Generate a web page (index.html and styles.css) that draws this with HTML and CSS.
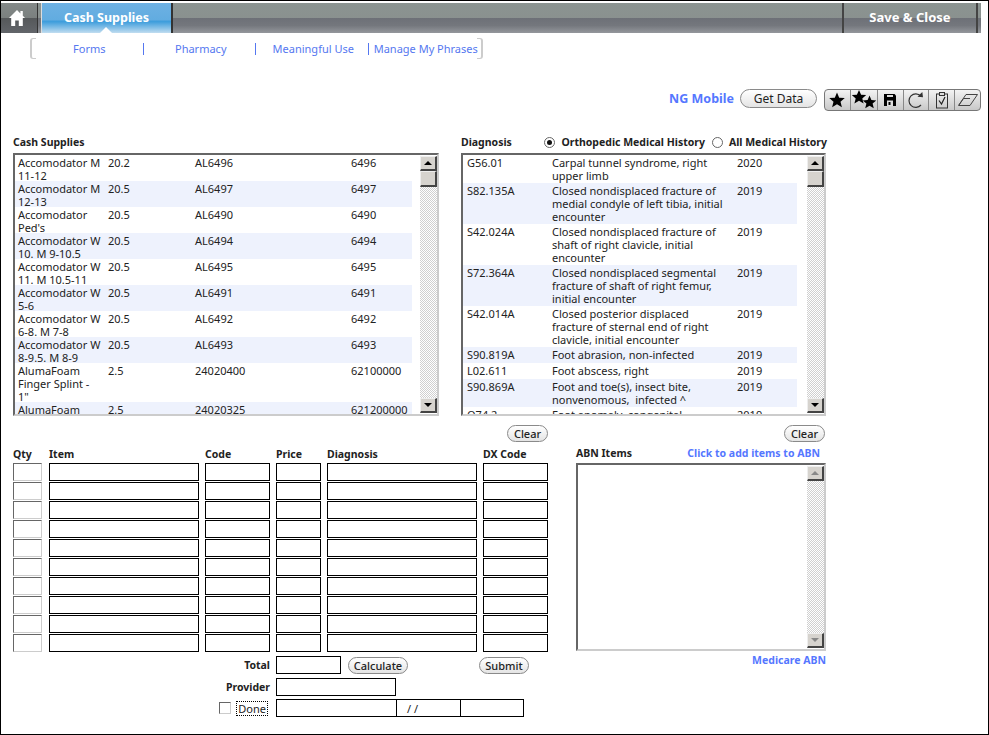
FILE: index.html
```html
<!DOCTYPE html>
<html lang="en">
<head>
<meta charset="utf-8">
<title>Cash Supplies</title>
<link rel="stylesheet" href="styles.css">
</head>
<body>
<div class="frame">
  <header class="toolbar">
    <div class="home"><svg width="18" height="18" viewBox="0 0 18 18"><path fill="#fff" d="M9 1 L1 9 L3.200 9 L3.200 17 L7.200 17 L7.200 11.500 L10.800 11.500 L10.800 17 L14.800 17 L14.800 9 L17 9 L14.800 6.800 L14.800 2 L12.400 2 L12.400 4.400 Z"/></svg></div>
    <div class="tab">Cash Supplies<span class="caret"></span></div>
    <div class="spacer"></div>
    <div class="save">Save &amp; Close</div>
  </header>
  <nav class="subnav">
    <a class="sub s1">Forms</a><a class="sub s2">Pharmacy</a><a class="sub s3">Meaningful Use</a><a class="sub s4">Manage My Phrases</a>
  </nav>
  <div class="mobile-row">
    <span class="link ng">NG Mobile</span>
    <button class="pill get">Get Data</button>
    <div class="iconbar">
      <div class="ic"><svg width="18" height="18" viewBox="0 0 18 18"><path d="M9 1.500l2.200 5.200 5.600.4-4.300 3.600 1.400 5.500L9 13.300l-4.900 2.900 1.400-5.500L1.200 7.100l5.600-.4z"/></svg></div>
      <div class="ic"><svg width="26" height="22" viewBox="0 0 26 22"><path d="M8 1l2.100 4.700 5.100.4-3.900 3.300 1.300 5L8 11.800l-4.600 2.600 1.300-5L.8 6.100l5.100-.4z"/><path d="M18.500 6.500l1.900 4.500 4.900.4-3.700 3.100 1.200 4.800-4.300-2.500-4.300 2.500 1.200-4.800-3.700-3.100 4.900-.4z"/></svg></div>
      <div class="ic"><svg width="12" height="12" viewBox="0 0 12 12"><path d="M0 0h10.500L12 1.500V12H0z"/><rect x="3" y="1" width="6" height="2" fill="#ddd"/><rect x="3" y="6.500" width="6" height="5.500" fill="#ddd"/><rect x="4.500" y="8" width="2" height="3"/></svg></div>
      <div class="ic"><svg width="16" height="20" viewBox="0 0 16 20"><path fill="none" stroke="#333" stroke-width="1.200" d="M12.800 6A6.800 6.800 0 1 0 13 15"/><path fill="#333" d="M9.500 6.800L15 7.200 14.300 2z"/></svg></div>
      <div class="ic"><svg width="14" height="18" viewBox="0 0 14 18"><rect x="1.500" y="3" width="11" height="14" fill="none" stroke="#333"/><rect x="4.500" y="1.500" width="5" height="3" fill="#ddd" stroke="#333"/><path fill="none" stroke="#222" stroke-width="1.200" d="M4 9.500l2.500 3.500L10 6"/></svg></div>
      <div class="ic"><svg width="22" height="14" viewBox="0 0 22 14"><path fill="none" stroke="#444" d="M9 1.500H20.500L13 12.500H1.500z"/><path fill="none" stroke="#444" d="M6.500 5.500L13 5.500M6.500 5.500L2 12"/></svg></div>
    </div>
  </div>

  <section class="upper">
    <div class="col-left">
      <div class="label-row"><b class="lbl">Cash Supplies</b></div>
      <div class="listbox left-box">
        <div class="rows">
          <div class="row"><span class="c1">Accomodator M 11-12</span><span class="c2">20.2</span><span class="c3">AL6496</span><span>6496</span></div>
          <div class="row alt"><span class="c1">Accomodator M 12-13</span><span class="c2">20.5</span><span class="c3">AL6497</span><span>6497</span></div>
          <div class="row"><span class="c1">Accomodator Ped's</span><span class="c2">20.5</span><span class="c3">AL6490</span><span>6490</span></div>
          <div class="row alt"><span class="c1">Accomodator W 10. M 9-10.5</span><span class="c2">20.5</span><span class="c3">AL6494</span><span>6494</span></div>
          <div class="row"><span class="c1">Accomodator W 11. M 10.5-11</span><span class="c2">20.5</span><span class="c3">AL6495</span><span>6495</span></div>
          <div class="row alt"><span class="c1">Accomodator W 5-6</span><span class="c2">20.5</span><span class="c3">AL6491</span><span>6491</span></div>
          <div class="row"><span class="c1">Accomodator W 6-8. M 7-8</span><span class="c2">20.5</span><span class="c3">AL6492</span><span>6492</span></div>
          <div class="row alt"><span class="c1">Accomodator W 8-9.5. M 8-9</span><span class="c2">20.5</span><span class="c3">AL6493</span><span>6493</span></div>
          <div class="row tall"><span class="c1">AlumaFoam Finger Splint -<br>1"</span><span class="c2">2.5</span><span class="c3">24020400</span><span>62100000</span></div>
          <div class="row alt"><span class="c1">AlumaFoam</span><span class="c2">2.5</span><span class="c3">24020325</span><span>621200000</span></div>
        </div>
        <div class="sb"><div class="sbtn up"><i></i></div><div class="thumb"></div><div class="track"></div><div class="sbtn down"><i></i></div></div>
      </div>
    </div>
    <div class="col-right">
      <div class="label-row">
        <b class="lbl dx-title">Diagnosis</b>
        <span class="radio on"></span><b class="lbl opt1">Orthopedic Medical History</b>
        <span class="radio"></span><b class="lbl">All Medical History</b>
      </div>
      <div class="listbox right-box">
        <div class="rows">
          <div class="drow"><span class="d1">G56.01</span><span class="d2">Carpal tunnel syndrome, right upper limb</span><span>2020</span></div>
          <div class="drow alt"><span class="d1">S82.135A</span><span class="d2">Closed nondisplaced fracture of medial condyle of left tibia, initial encounter</span><span>2019</span></div>
          <div class="drow"><span class="d1">S42.024A</span><span class="d2">Closed nondisplaced fracture of shaft of right clavicle, initial encounter</span><span>2019</span></div>
          <div class="drow alt"><span class="d1">S72.364A</span><span class="d2">Closed nondisplaced segmental fracture of shaft of right femur, initial encounter</span><span>2019</span></div>
          <div class="drow"><span class="d1">S42.014A</span><span class="d2">Closed posterior displaced fracture of sternal end of right clavicle, initial encounter</span><span>2019</span></div>
          <div class="drow alt"><span class="d1">S90.819A</span><span class="d2">Foot abrasion, non-infected</span><span>2019</span></div>
          <div class="drow"><span class="d1">L02.611</span><span class="d2">Foot abscess, right</span><span>2019</span></div>
          <div class="drow alt"><span class="d1">S90.869A</span><span class="d2">Foot and toe(s), insect bite, nonvenomous,&nbsp; infected ^</span><span>2019</span></div>
          <div class="drow"><span class="d1">Q74.2</span><span class="d2">Foot anomaly, congenital</span><span>2019</span></div>
        </div>
        <div class="sb"><div class="sbtn up"><i></i></div><div class="thumb"></div><div class="track"></div><div class="sbtn down"><i></i></div></div>
      </div>
    </div>
  </section>

  <div class="clear-row">
    <div class="clear-a"><button class="pill small">Clear</button></div>
    <div class="clear-b"><button class="pill small">Clear</button></div>
  </div>

  <section class="lower">
    <div class="order">
      <div class="grid-head">
        <b class="lbl">Qty</b><b class="lbl">Item</b><b class="lbl">Code</b><b class="lbl">Price</b><b class="lbl">Diagnosis</b><b class="lbl">DX Code</b>
      </div>
      <div class="grid-row"><input class="qty"><input class="box"><input class="box"><input class="box"><input class="box"><input class="box"></div>
      <div class="grid-row"><input class="qty"><input class="box"><input class="box"><input class="box"><input class="box"><input class="box"></div>
      <div class="grid-row"><input class="qty"><input class="box"><input class="box"><input class="box"><input class="box"><input class="box"></div>
      <div class="grid-row"><input class="qty"><input class="box"><input class="box"><input class="box"><input class="box"><input class="box"></div>
      <div class="grid-row"><input class="qty"><input class="box"><input class="box"><input class="box"><input class="box"><input class="box"></div>
      <div class="grid-row"><input class="qty"><input class="box"><input class="box"><input class="box"><input class="box"><input class="box"></div>
      <div class="grid-row"><input class="qty"><input class="box"><input class="box"><input class="box"><input class="box"><input class="box"></div>
      <div class="grid-row"><input class="qty"><input class="box"><input class="box"><input class="box"><input class="box"><input class="box"></div>
      <div class="grid-row"><input class="qty"><input class="box"><input class="box"><input class="box"><input class="box"><input class="box"></div>
      <div class="grid-row"><input class="qty"><input class="box"><input class="box"><input class="box"><input class="box"><input class="box"></div>
      <div class="foot total-row">
        <b class="lbl foot-label">Total</b><input class="box total"><button class="pill small calc">Calculate</button><button class="pill small submit">Submit</button>
      </div>
      <div class="foot provider-row">
        <b class="lbl foot-label">Provider</b><input class="box provider">
      </div>
      <div class="foot done-row">
        <div class="foot-label done-wrap"><span class="check"></span><span class="done">Done</span></div>
        <div class="sign"><div class="sign-a"></div><div class="sign-b">/ /</div><div class="sign-c"></div></div>
      </div>
    </div>
    <div class="abn">
      <div class="abn-head"><b class="lbl">ABN Items</b><span class="link abn-link">Click to add items to ABN</span></div>
      <div class="listbox abn-box">
        <div class="rows"></div>
        <div class="sb off"><div class="sbtn up"><i></i></div><div class="track"></div><div class="sbtn down"><i></i></div></div>
      </div>
      <div class="abn-foot"><span class="link small-link">Medicare ABN</span></div>
    </div>
  </section>
</div>
</body>
</html>
```
FILE: styles.css
```css
* { box-sizing: border-box; }
html, body { margin: 0; padding: 0; background: #fff; }
body { font-family: "Noto Sans", "Liberation Sans", sans-serif; font-size: 11px; color: #222; overflow: hidden; }
.frame { width: 989px; height: 735px; border: 1px solid #000; padding-top: 2px; overflow: hidden; }

/* Top bar */
.toolbar { display: flex; height: 30px; margin-right: 7px; background: linear-gradient(#8b9491 0, #8a918f 50%, #6d7077 50%, #74777d 75%, #94979c 100%); color: #fff; font-weight: 700; font-size: 12.500px; }
.home { width: 37px; display: flex; align-items: center; justify-content: center; padding-right: 4px; background: linear-gradient(#838988 0, #7b807f 50%, #55585a 50%, #62656a 100%); border-right: 1px solid #333; }
.tab { position: relative; width: 132px; margin-left: 3px; display: flex; align-items: center; justify-content: center; padding-bottom: 2px; background: linear-gradient(#6db1e3 0, #62ace0 55%, #3d9ddc 62%, #8cc3e8 85%, #c1ddf0 100%); border-left: 1px solid #ddd; border-right: 2px solid #333; }
.caret { position: absolute; left: 58px; bottom: 0; border: 6px solid transparent; border-top: 0; border-bottom: 6px solid #fff; }
.spacer { flex: 1; }
.save { width: 136px; margin-right: 3px; font-size: 13px; display: flex; align-items: center; justify-content: center; padding-bottom: 2px; border-left: 2px solid #444; border-right: 2px solid #444; }

/* Sub navigation */
.subnav { display: flex; height: 19px; margin: 6px 0 0 29px; width: 453px; font-size: 11px; align-items: center; }
.subnav::before, .subnav::after { content: ""; flex: none; width: 4px; height: 19px; border: 1px solid #ccc; border-width: 1px 0 1px 2px; border-radius: 3px 0 0 3px; }
.subnav::after { margin-left: -4px; border-width: 1px 2px 1px 0; border-radius: 0 3px 3px 0; }
.sub { display: block; color: #5577f0; text-align: center; line-height: 12px; white-space: nowrap; }
.s1 { width: 107px; }
.s2, .s3 { width: 113px; border-left: 1px solid #5577f0; padding-left: 3px; }
.s4 { width: 114px; border-left: 1px solid #5577f0; padding-left: 2px; }

.link { color: #5577ff; font-weight: 700; font-size: 10.500px; }

/* Mobile row */
.mobile-row { display: flex; align-items: center; justify-content: flex-end; margin-top: 31px; margin-right: 7px; height: 22px; }
.ng { font-size: 12.500px; margin: 0 6px 3px 0; }
.pill { font-family: inherit; color: #222; border: 1px solid #8a8a8a; border-radius: 10px; background: linear-gradient(#fff, #e4e4e4); padding: 0; }
.get { width: 77px; height: 19px; font-size: 12px; margin: 0 7px 3px 0; }
.small { height: 17px; font-size: 11px; font-weight: 500; border-radius: 9px; }
.iconbar { display: flex; width: 157px; height: 22px; border: 1px solid #777; border-radius: 4px; background: linear-gradient(#f3f3f3, #c8c8c8); overflow: hidden; }
.ic { flex: 1; display: flex; align-items: center; justify-content: center; border-left: 1px solid #888; }
.ic:first-child { border-left: 0; }

/* Upper lists */
.upper { display: flex; margin: 24px 0 0 12px; }
.col-left { width: 448px; }
.col-right { width: 366px; }
.label-row { display: flex; align-items: center; height: 14px; margin-bottom: 4px; }
.lbl { font-weight: 700; font-size: 10.500px; color: #222; white-space: nowrap; }
.dx-title { width: 84px; }
.opt1 { margin-right: 7px; }
.radio { flex: none; width: 11px; height: 11px; margin: 0 6px 0 0; border: 1px solid #666; border-radius: 50%; background: #fff; display: inline-flex; align-items: center; justify-content: center; }
.radio.on::after { content: ""; width: 5px; height: 5px; border-radius: 50%; background: #111; }

.listbox { display: flex; height: 263px; border: 2px solid; border-color: #666 #ccc #ccc #666; overflow: hidden; background: #fff; }
.left-box { width: 426px; }
.right-box { width: 365px; }
.rows { flex: 1; min-width: 0; overflow: hidden; }
.left-box .rows { padding-right: 8px; }
.right-box .rows { padding-right: 10px; }
.row { display: flex; line-height: 13px; padding: 1px 0 0 3px; height: 26px; }
.row.tall { height: 39px; }
.row span { flex: none; }
.c1 { width: 90px; padding-right: 2px; }
.c2 { width: 87px; }
.c3 { width: 156px; }
.drow { display: flex; line-height: 13px; padding: 1px 0 1px 4px; min-height: 16px; }
.d1 { width: 85px; flex: none; }
.d2 { width: 185px; flex: none; padding-right: 10px; }
.alt { background: #eef2fd; }

/* Fake scrollbar */
.sb { width: 17px; flex: none; display: flex; flex-direction: column; padding: 1px 0; }
.sbtn, .thumb { flex: none; width: 17px; background: #d6d3ce; border: 1px solid; border-width: 1px 2px 2px 1px; border-color: #eee #444 #444 #eee; }
.sbtn { height: 15px; display: flex; align-items: center; justify-content: center; }
.thumb { height: 16px; }
.track { flex: 1; width: 17px; background-color: #fff; background-image: conic-gradient(#d0d0d0 25%, #fff 25% 50%, #d0d0d0 50% 75%, #fff 75%); background-size: 2px 2px; }
.sbtn i { width: 0; height: 0; border: 4px solid transparent; }
.up i { border-top: 0; border-bottom: 4px solid #000; }
.down i { border-bottom: 0; border-top: 4px solid #000; }
.off .up i { border-bottom-color: #888; }
.off .down i { border-top-color: #888; }

/* Clear buttons */
.clear-row { display: flex; margin: 9px 0 0 12px; height: 17px; }
.clear-a { width: 535px; display: flex; justify-content: flex-end; }
.clear-b { width: 277px; display: flex; justify-content: flex-end; }
.clear-row .small { width: 41px; }

/* Lower */
.lower { display: flex; margin: 3px 0 0 12px; }
.order { width: 563px; }
.grid-head, .grid-row { display: grid; grid-template-columns: 30px 150px 65px 45px 150px 65px; column-gap: 6px; }
.grid-head { column-gap: 6px; height: 18px; align-items: center; padding-bottom: 1px; }
.grid-row { height: 18px; margin-bottom: 1px; }
.box, .qty { display: block; width: 100%; height: 18px; margin: 0; padding: 0; background: #fff; border-radius: 0; outline: 0; }
.box { border: 1px solid #000; }
.qty { width: 29px; border: 1px solid; border-color: #666 #ccc #ccc #666; }
.foot { display: flex; align-items: center; }
.foot-label { flex: none; width: 263px; padding-right: 6px; text-align: right; }
.total-row { height: 18px; margin-top: 4px; }
.total { width: 65px; flex: none; }
.calc { width: 60px; margin-left: 7px; }
.submit { width: 50px; margin-left: 71px; }
.provider-row { height: 18px; margin-top: 4px; }
.provider { width: 120px; flex: none; }
.done-row { height: 18px; margin-top: 3px; }
.done-wrap { display: flex; align-items: center; justify-content: flex-end; padding-right: 8px; }
.check { width: 12px; height: 12px; margin-right: 5px; border: 1px solid; border-color: #666 #ccc #ccc #666; background: #fff; }
.done { border: 1px dotted #000; line-height: 13px; padding: 0 1px; }
.sign { display: flex; width: 248px; height: 18px; border: 1px solid #000; }
.sign-a { width: 119px; }
.sign-b { width: 64px; border-left: 1px solid #000; padding-left: 10px; line-height: 17px; }
.sign-c { width: 63px; border-left: 1px solid #000; }

.abn { width: 250px; }
.abn-head { display: flex; justify-content: space-between; align-items: center; height: 18px; padding: 0 6px 2px 0; }
.abn-box { height: 188px; width: 250px; }
.abn-foot { display: flex; justify-content: flex-end; margin-top: 2px; line-height: 14px; }
```
